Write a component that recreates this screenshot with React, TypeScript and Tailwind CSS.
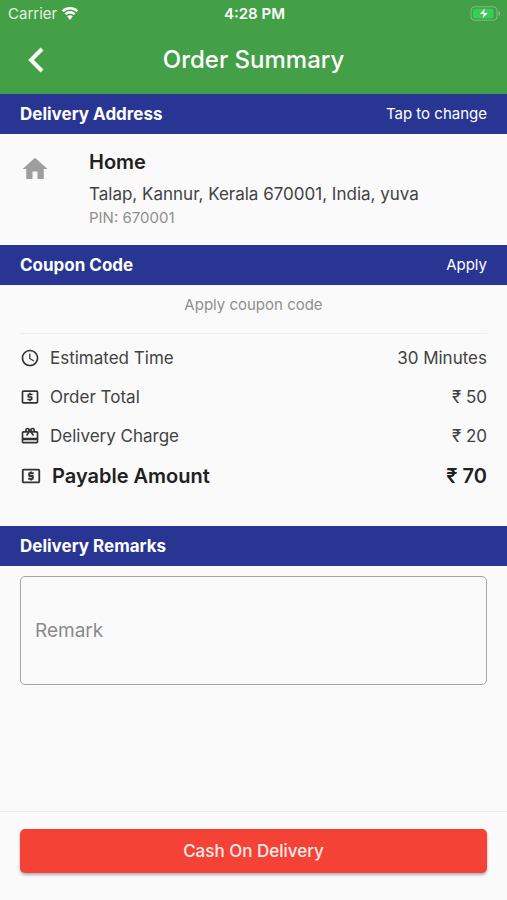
import type { ReactNode } from "react";
import type { IconType } from "react-icons";
import {
  MdAccessTime,
  MdCardGiftcard,
  MdHome,
  MdOutlineLocalAtm,
} from "react-icons/md";

function WifiIcon() {
  return (
    <svg viewBox="0 0 18 14" className="h-3.5 w-[18px]" fill="currentColor" aria-hidden="true">
      <path d="M9 2.500c2.500 0 4.800 1 6.500 2.600l1.700-1.700A12 12 0 0 0 9 .1 12 12 0 0 0 .8 3.400l1.700 1.700A9.400 9.400 0 0 1 9 2.500Z" />
      <path d="M9 6.700c1.400 0 2.700.5 3.700 1.400l1.800-1.800A8 8 0 0 0 9 4.100 8 8 0 0 0 3.500 6.300l1.800 1.800c1-.9 2.300-1.400 3.700-1.400Z" />
      <path d="M9 8.200c-1.100 0-2.100.4-2.800 1.100L9 13l2.800-3.700C11.100 8.600 10.100 8.200 9 8.200Z" />
    </svg>
  );
}

function BatteryIcon() {
  return (
    <svg viewBox="0 0 31 15" className="h-[15px] w-[31px]" aria-hidden="true">
      <rect x="1" y="0.800" width="26" height="13.400" rx="3.500" fill="none" stroke="#84bb86" strokeWidth="1" />
      <path d="M28.500 5v5c1-.4 1.600-1.400 1.600-2.500S29.500 5.400 28.500 5Z" fill="#84bb86" />
      <rect x="3" y="2.800" width="20.500" height="9.400" rx="1.800" fill="#34d158" />
      <path d="M15.500 1.500 9.300 8.300h4l-1.300 5.200 6.600-7h-4.200l1.100-5Z" fill="#fff" stroke="#43a047" strokeWidth="0.600" />
    </svg>
  );
}

function SectionBar({ title, children }: { title: string; children?: ReactNode }) {
  return (
    <div className="flex h-10 items-center justify-between bg-[#283593] px-5 text-white">
      <h2 className="text-[17px] leading-6 font-bold">{title}</h2>
      {children}
    </div>
  );
}

function SummaryRow({ icon: Icon, label, value }: { icon: IconType; label: string; value: string }) {
  return (
    <div className="flex h-[39px] items-center">
      <Icon className="mr-2.5 size-5 text-[#333]" aria-hidden="true" />
      <dt className="text-[17px] leading-6">{label}</dt>
      <dd className="ml-auto text-[17px] leading-6">{value}</dd>
    </div>
  );
}

export default function App() {
  return (
    <div className="flex min-h-screen flex-col bg-[#fafafa] font-['Inter',sans-serif] text-[#424242]">
      <header className="bg-[#43a047] text-white">
        <div className="grid h-[27px] grid-cols-3 items-center pr-1.5 pl-2">
          <div className="flex items-center gap-1">
            <span className="text-[15px] leading-5 text-[#e3f2e4]">Carrier</span>
            <WifiIcon />
          </div>
          <span className="text-center text-[15px] leading-5 font-semibold">4:28 PM</span>
          <div className="flex justify-end">
            <BatteryIcon />
          </div>
        </div>
        <div className="grid h-[67px] grid-cols-[40px_1fr_40px] items-center px-4 pb-0.5">
          <button type="button" aria-label="Back" className="flex size-10 items-center justify-center">
            <svg viewBox="0 0 16 26" className="h-[26px] w-4" fill="none" stroke="currentColor" strokeWidth="4" aria-hidden="true">
              <path d="M14 2 3 13l11 11" />
            </svg>
          </button>
          <h1 className="text-center text-2xl font-medium">Order Summary</h1>
        </div>
      </header>

      <main>
        <section>
          <SectionBar title="Delivery Address">
            <button type="button" className="text-[15px] leading-6">Tap to change</button>
          </SectionBar>
          <div className="flex h-[111px] px-5 pt-4">
            <MdHome className="mt-1 size-[30px] text-[#9e9e9e]" aria-hidden="true" />
            <div className="ml-[39px]">
              <h3 className="text-[20px] leading-6 font-semibold text-[#212121]">Home</h3>
              <p className="mt-2 text-[17px] leading-6">Talap, Kannur, Kerala 670001, India, yuva</p>
              <p className="text-[15px] leading-6 text-[#8f8f8f]">PIN: 670001</p>
            </div>
          </div>
        </section>

        <section>
          <SectionBar title="Coupon Code">
            <button type="button" className="text-[15px] leading-6">Apply</button>
          </SectionBar>
          <div className="px-5">
            <p className="border-b border-[#eeeeee] pt-2 pb-4 text-center text-[15px] leading-6 text-[#8f8f8f]">
              Apply coupon code
            </p>
            <dl className="pt-1">
              <SummaryRow icon={MdAccessTime} label="Estimated Time" value="30 Minutes" />
              <SummaryRow icon={MdOutlineLocalAtm} label="Order Total" value="₹ 50" />
              <SummaryRow icon={MdCardGiftcard} label="Delivery Charge" value="₹ 20" />
              <div className="flex h-[42px] items-center text-[20px] leading-6 font-semibold text-[#212121]">
                <MdOutlineLocalAtm className="mr-2.5 size-[22px] text-[#333]" aria-hidden="true" />
                <dt>Payable Amount</dt>
                <dd className="ml-auto">₹ 70</dd>
              </div>
            </dl>
          </div>
        </section>

        <section className="pt-[29px]">
          <SectionBar title="Delivery Remarks" />
          <div className="px-5 pt-2.5">
            <input
              type="text"
              aria-label="Remark"
              placeholder="Remark"
              className="block h-[109px] w-full rounded-[5px] border border-[#a6a6a6] bg-transparent px-3.5 text-[19px] leading-6 placeholder:text-[#8a8a8a]"
            />
          </div>
        </section>
      </main>

      <footer className="mt-auto border-t border-[#eeeeee] px-5 pt-[17px] pb-[27px]">
        <button
          type="button"
          className="block h-11 w-full rounded-[5px] bg-[#f44336] text-[17px] leading-6 font-medium text-[#ffebe9] shadow-[0_2px_3px_rgba(0,0,0,0.3)]"
        >
          Cash On Delivery
        </button>
      </footer>
    </div>
  );
}
